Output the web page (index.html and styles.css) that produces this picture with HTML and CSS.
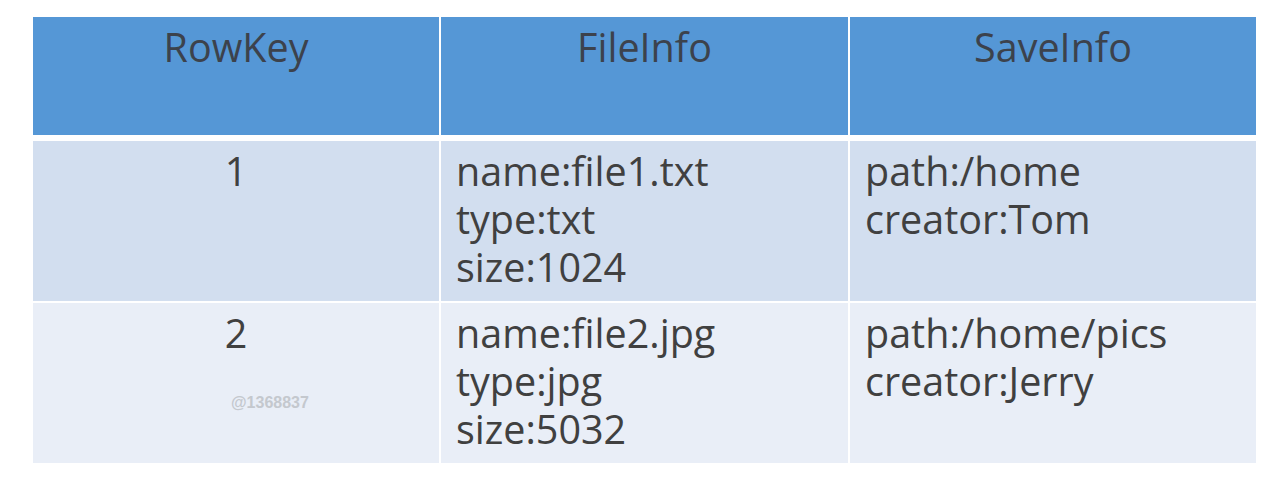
FILE: index.html
```html
<!DOCTYPE html>
<html>
<head>
<meta charset="utf-8">
<link rel="stylesheet" href="styles.css">
</head>
<body>
<div class="table">
  <div class="cell head">RowKey</div>
  <div class="cell head">FileInfo</div>
  <div class="cell head">SaveInfo</div>

  <div class="cell odd center">1</div>
  <div class="cell odd">name:file1.txt<br>type:txt<br>size:1024</div>
  <div class="cell odd">path:/home<br>creator:Tom</div>

  <div class="cell even center key">2<span class="mark">@1368837</span></div>
  <div class="cell even">name:file2.jpg<br>type:jpg<br>size:5032</div>
  <div class="cell even">path:/home/pics<br>creator:Jerry</div>
</div>
</body>
</html>
```
FILE: styles.css
```css
html, body {
  margin: 0;
  padding: 0;
  background: #ffffff;
}
body {
  padding: 17px 0 0 33px;
  font-family: "Open Sans", "Noto Sans", sans-serif;
  color: #404040;
}
.table {
  display: grid;
  grid-template-columns: 406px 407px 406px;
  grid-template-rows: 118px 164px 160px;
  column-gap: 2px;
  row-gap: 2px;
  width: 1223px;
}
.cell {
  font-size: 39.5px;
  line-height: 48px;
  padding: 0 15px;
  box-sizing: border-box;
}
.head {
  background: #5597d6;
  color: #3c424c;
  text-align: center;
  padding-top: 6px;
}
.odd {
  background: #d2deef;
  margin-top: 4px;
  padding-top: 6px;
}
.even {
  background: #e9eef7;
  padding-top: 6px;
}
.center {
  text-align: center;
}
.key {
  position: relative;
}
.mark {
  position: absolute;
  left: 198px;
  top: 92px;
  font-family: "Liberation Sans", Arial, sans-serif;
  font-size: 16px;
  line-height: 16px;
  font-weight: bold;
  color: #c4c8ce;
}
```
